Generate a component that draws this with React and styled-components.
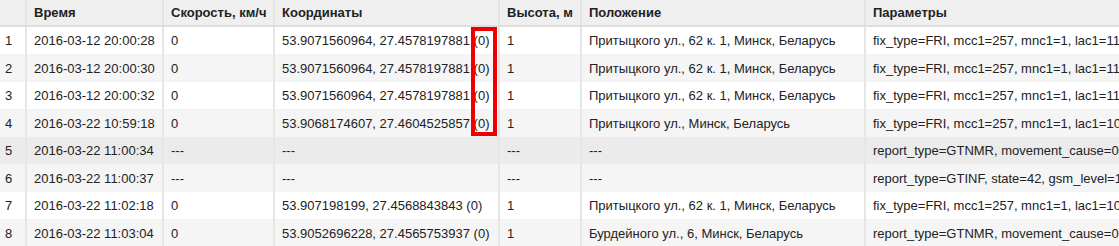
import styled, { createGlobalStyle } from 'styled-components'

const GlobalStyle = createGlobalStyle`
    html, body {
        margin: 0;
        padding: 0;
        background: #ffffff;
        overflow: hidden;
    }
    body {
        font-family: 'Liberation Sans', Arial, sans-serif;
        font-size: 13px;
        color: #222;
    }
`

const columns = [
    { title: '', width: 26 },
    { title: 'Время', width: 137 },
    { title: 'Скорость, км/ч', width: 111 },
    { title: 'Координаты', width: 225 },
    { title: 'Высота, м', width: 82 },
    { title: 'Положение', width: 284 },
    { title: 'Параметры', width: 420 },
]

const rows = [
    ['2016-03-12 20:00:28', '0', '53.9071560964, 27.4578197881 (0)', '1', 'Притыцкого ул., 62 к. 1, Минск, Беларусь', 'fix_type=FRI, mcc1=257, mnc1=1, lac1=1130, cid1=8812, rssi1=-71'],
    ['2016-03-12 20:00:30', '0', '53.9071560964, 27.4578197881 (0)', '1', 'Притыцкого ул., 62 к. 1, Минск, Беларусь', 'fix_type=FRI, mcc1=257, mnc1=1, lac1=1130, cid1=8812, rssi1=-71'],
    ['2016-03-12 20:00:32', '0', '53.9071560964, 27.4578197881 (0)', '1', 'Притыцкого ул., 62 к. 1, Минск, Беларусь', 'fix_type=FRI, mcc1=257, mnc1=1, lac1=1130, cid1=8812, rssi1=-71'],
    ['2016-03-22 10:59:18', '0', '53.9068174607, 27.4604525857 (0)', '1', 'Притыцкого ул., Минск, Беларусь', 'fix_type=FRI, mcc1=257, mnc1=1, lac1=1005, cid1=2341, rssi1=-69'],
    ['2016-03-22 11:00:34', '---', '---', '---', '---', 'report_type=GTNMR, movement_cause=0, state=41'],
    ['2016-03-22 11:00:37', '---', '---', '---', '---', 'report_type=GTINF, state=42, gsm_level=18, battery=98'],
    ['2016-03-22 11:02:18', '0', '53.907198199, 27.4568843843 (0)', '1', 'Притыцкого ул., 62 к. 1, Минск, Беларусь', 'fix_type=FRI, mcc1=257, mnc1=1, lac1=1005, cid1=2341, rssi1=-69'],
    ['2016-03-22 11:03:04', '0', '53.9052696228, 27.4565753937 (0)', '1', 'Бурдейного ул., 6, Минск, Беларусь', 'report_type=GTNMR, movement_cause=0, state=41'],
]

const App = () => (
    <Wrapper>
        <GlobalStyle />
        <Table>
            <colgroup>
                {columns.map((c, i) => (
                    <col key={i} style={{ width: c.width }} />
                ))}
            </colgroup>
            <thead>
                <tr>
                    {columns.map((c, i) => (
                        <Th key={i}>{c.title}</Th>
                    ))}
                </tr>
            </thead>
            <tbody>
                {rows.map((r, i) => (
                    <Row key={i} $even={i % 2 === 1} $empty={i === 4}>
                        <Td>{i + 1}</Td>
                        {r.map((v, j) => (
                            <Td key={j}>{v}</Td>
                        ))}
                    </Row>
                ))}
            </tbody>
        </Table>
        <Highlight />
    </Wrapper>
)

const Wrapper = styled.div`
    position: relative;
    width: 1119px;
    height: 246px;
    overflow: hidden;
`

const Table = styled.table`
    table-layout: fixed;
    border-collapse: collapse;
    width: 1285px;
`

const Th = styled.th`
    height: 26px;
    box-sizing: border-box;
    padding: 0 7px 1px;
    text-align: left;
    font-weight: bold;
    background: #efefef;
    border-bottom: 2px solid #dedede;
    border-left: 2px solid #e3e3e3;
    white-space: nowrap;
    overflow: hidden;
    color: #222;

    &:first-child {
        border-left: none;
    }
`

const Row = styled.tr`
    background: ${p => (p.$empty ? '#ebebeb' : p.$even ? '#f5f5f5' : '#ffffff')};
`

const Td = styled.td`
    padding: 5px 7px 3px;
    line-height: 18.57px;
    border-top: 1px solid #f3f3f3;
    border-left: 2px solid #e6e6e6;
    white-space: nowrap;
    overflow: hidden;

    &:first-child {
        border-left: none;
        padding-left: 5px;
    }
`

const Highlight = styled.div`
    position: absolute;
    left: 471px;
    top: 27px;
    width: 26px;
    height: 109px;
    box-sizing: border-box;
    border: 4px solid #ee0000;
`

export default App
